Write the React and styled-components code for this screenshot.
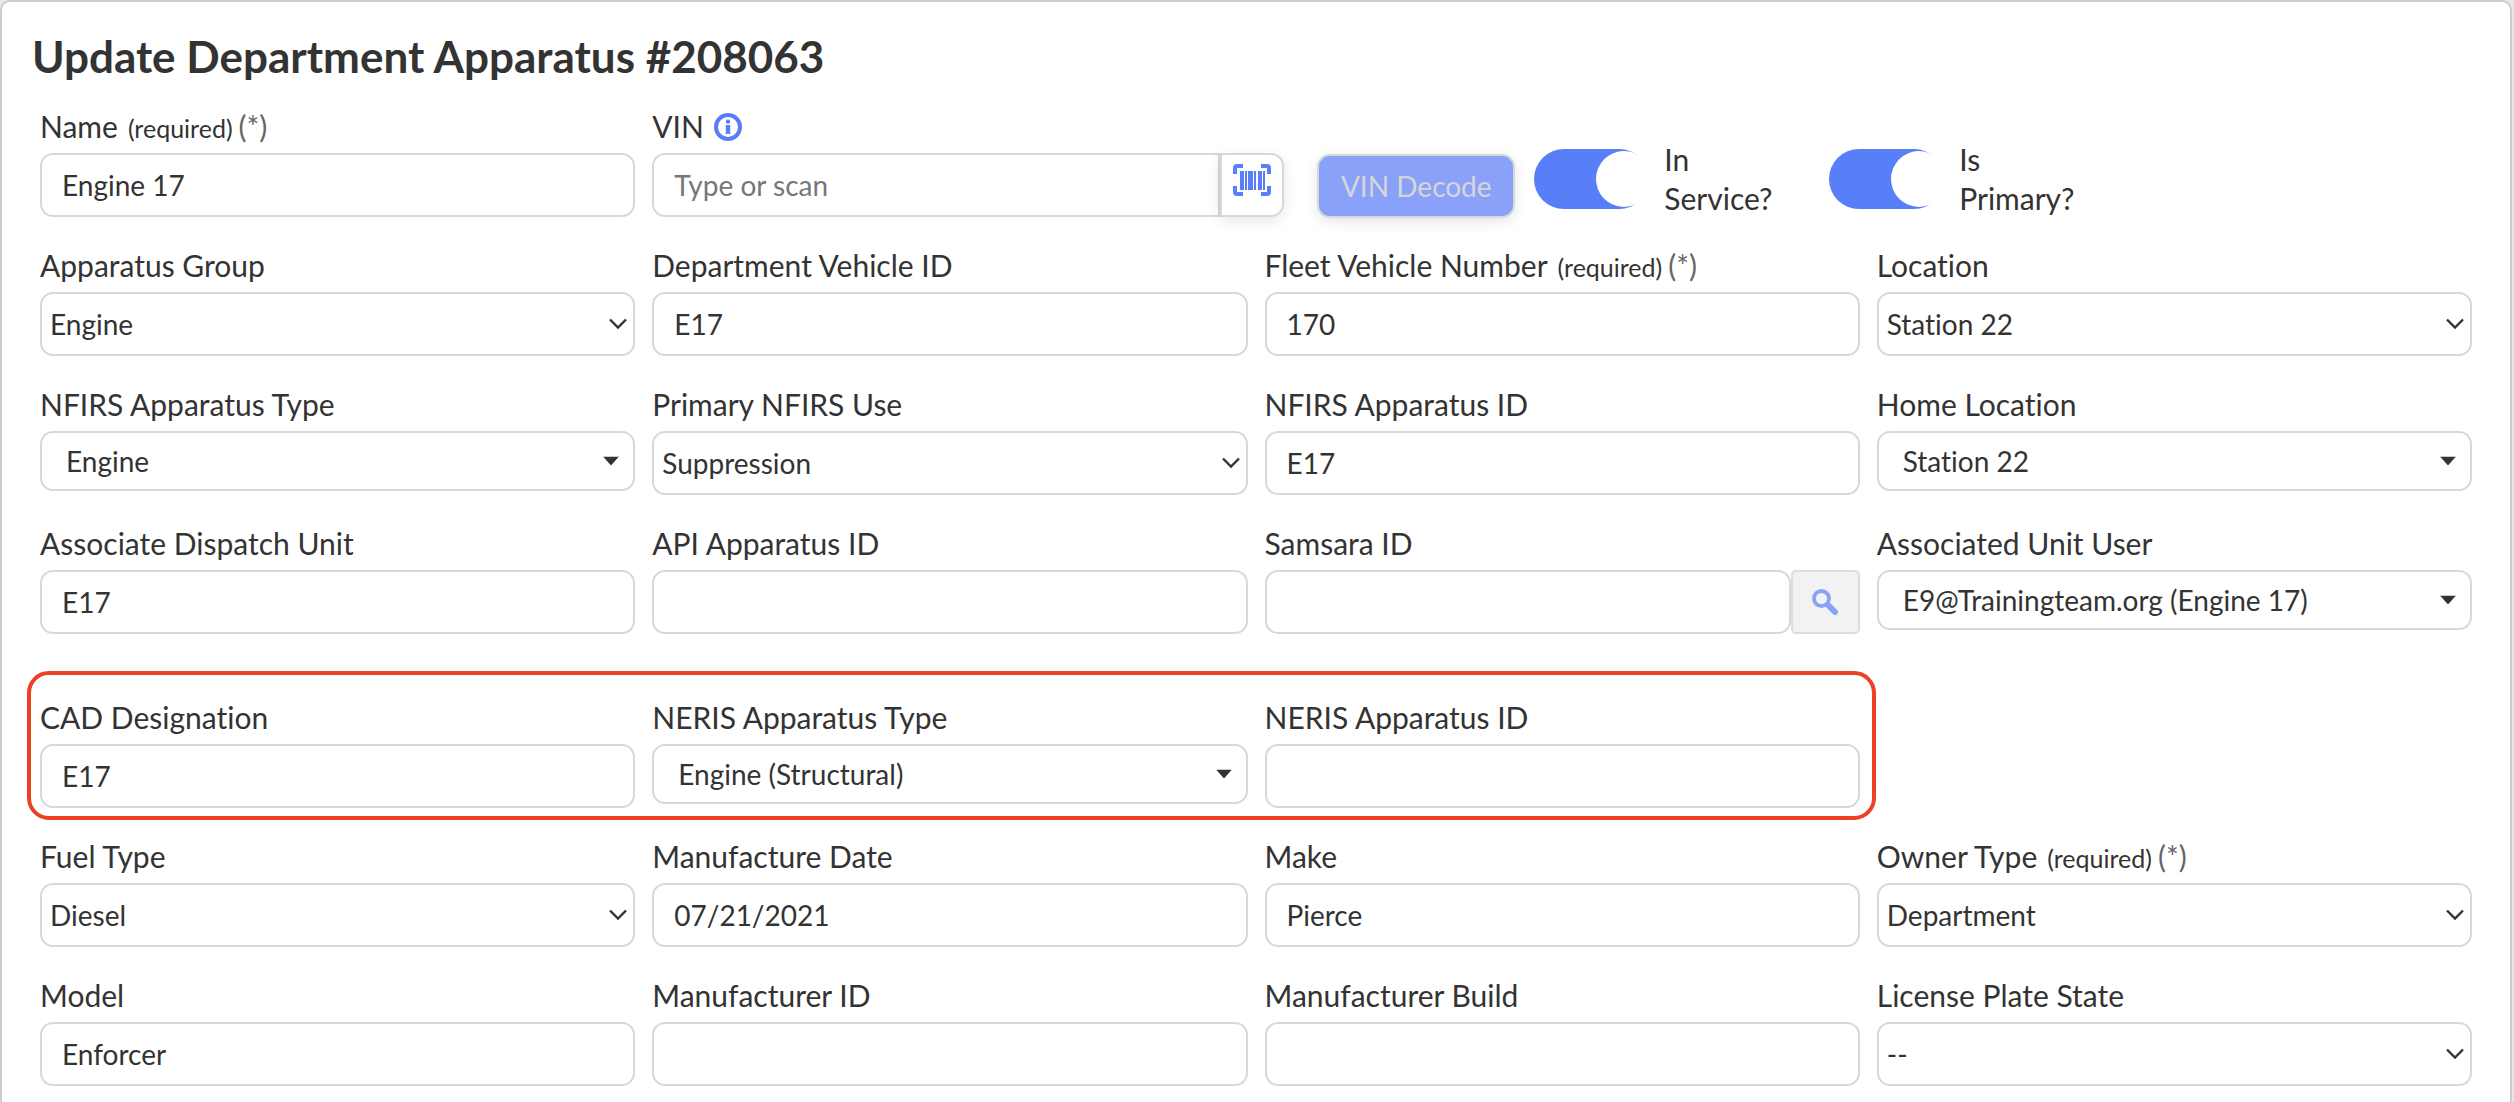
import React from 'react';
import styled, { createGlobalStyle, css } from 'styled-components';

const GlobalStyle = createGlobalStyle`
  * {
    box-sizing: border-box;
  }
  body {
    margin: 0;
    background: #e6e6ec;
    color: #333;
    font-family: Lato, 'Open Sans', sans-serif;
    font-size: 30px;
    font-variant-ligatures: none;
  }
`;

const Card = styled.main`
  min-height: 100vh;
  margin-right: 2px;
  padding: 26px 38px 16px;
  background: #fff;
  border: 2px solid #ccc;
  border-bottom: 0;
  border-radius: 10px 10px 0 0;
`;

const Title = styled.h1`
  margin: 0 0 27px -8px;
  font-size: 44px;
  line-height: 56px;
  font-weight: 700;
`;

const Row = styled.div`
  display: grid;
  grid-template-columns: repeat(4, minmax(0, 1fr));
  column-gap: 17px;
  align-items: start;
  margin-bottom: 33px;
`;

const Highlight = styled(Row)`
  position: relative;
  margin-top: 68px;

  &::after {
    content: '';
    position: absolute;
    top: -31px;
    right: calc(25% - 12px);
    bottom: -12px;
    left: -13px;
    border: 4px solid #ec4127;
    border-radius: 22px;
    pointer-events: none;
  }
`;

const FieldBox = styled.div`
  min-width: 0;
`;

const Label = styled.label`
  display: flex;
  align-items: baseline;
  height: 42px;
  line-height: 30px;
  white-space: nowrap;
`;

const Required = styled.span`
  margin-left: 10px;
  font-size: 25px;
`;

const Star = styled.span`
  margin-left: 6px;
  color: #666;
`;

const control = css`
  display: block;
  width: 100%;
  height: 64px;
  margin: 0;
  background: #fff;
  border: 2px solid #d8d8d8;
  border-radius: 13px;
  color: #333;
  font-family: inherit;
  font-size: 28px;
  font-variant-ligatures: none;
`;

const Input = styled.input`
  ${control}
  padding: 0 20px;

  &::placeholder {
    color: #777;
    opacity: 1;
  }
`;

const SelectWrap = styled.div`
  position: relative;

  svg {
    position: absolute;
    top: 50%;
    right: ${(p) => (p.$caret ? '16px' : '8px')};
    transform: translateY(-50%);
    pointer-events: none;
  }
`;

const Select = styled.select`
  ${control}
  height: ${(p) => (p.$caret ? '60px' : '64px')};
  padding: 0 40px 0 ${(p) => (p.$caret ? '24px' : '8px')};
  appearance: none;
`;

const Group = styled.div`
  display: flex;
`;

const SearchButton = styled.button`
  flex: none;
  display: grid;
  place-items: center;
  width: 69px;
  height: 64px;
  padding: 0;
  background: #f2f2f2;
  border: 2px solid #ddd;
  border-radius: 5px;
`;

const VinArea = styled.div`
  grid-column: 2 / 5;
  display: flex;
  align-items: flex-start;
  height: 106px;
`;

const VinField = styled.div`
  flex: none;
  width: 632px;
`;

const InfoIcon = styled.svg`
  align-self: center;
  margin: 0 0 10px 10px;
`;

const VinInput = styled(Input)`
  border-radius: 13px 0 0 13px;
`;

const ScanButton = styled.button`
  flex: none;
  width: 64px;
  height: 64px;
  padding: 0 0 8px;
  background: #fff;
  border: 2px solid #d8d8d8;
  border-radius: 0 13px 13px 0;
  box-shadow: 0 4px 14px rgba(0, 0, 0, 0.1);
`;

const DecodeButton = styled.button`
  flex: none;
  width: 198px;
  height: 64px;
  margin: 43px 19px 0 33px;
  padding: 0;
  background: #8aa1f9;
  border: 2px solid #d8d8d8;
  border-radius: 13px;
  box-shadow: 0 4px 14px rgba(0, 0, 0, 0.1);
  color: #d6d6d6;
  font-family: inherit;
  font-size: 28px;
`;

const ToggleLabel = styled.label`
  flex: none;
  display: flex;
  width: 295px;
  margin-top: 29px;
  line-height: 39px;
`;

const Toggle = styled.input`
  appearance: none;
  flex: none;
  position: relative;
  width: 115px;
  height: 60px;
  margin: 9px 15px 0 0;
  background: #587ef8;
  border-radius: 30px;

  &::after {
    content: '';
    position: absolute;
    top: 2px;
    left: 62px;
    width: 56px;
    height: 56px;
    border-radius: 50%;
    background: #fff;
  }
`;

const ToggleText = styled.span`
  width: 120px;
`;

const Chevron = () => (
  <svg width="18" height="12" viewBox="0 0 18 12" fill="none" stroke="#333" strokeWidth="2.4">
    <path d="M1 1.5l8 8 8-8" />
  </svg>
);

const Caret = () => (
  <svg width="16" height="9" viewBox="0 0 16 9" fill="#333">
    <path d="M0 0h16L8 9z" />
  </svg>
);

const SearchIcon = () => (
  <svg width="26" height="26" viewBox="0 0 26 26" fill="none" stroke="#8aa1f9">
    <circle cx="9.5" cy="9.5" r="7.5" strokeWidth="3.8" />
    <path d="M17 17l6 6" strokeWidth="6" strokeLinecap="round" />
    <path d="M14.5 14.5l3 3" strokeWidth="4" />
  </svg>
);

const BarcodeIcon = () => (
  <svg width="38" height="32" viewBox="0 0 38 32" fill="none" stroke="#587ef8">
    <path d="M10 2H4a2 2 0 0 0-2 2v6M28 2h6a2 2 0 0 1 2 2v6M10 30H4a2 2 0 0 1-2-2v-6M28 30h6a2 2 0 0 0 2-2v-6" strokeWidth="4" />
    <path fill="#587ef8" stroke="none" d="M7 7h4v19H7zM12 7h2v19h-2zM15 7h5v19h-5zM21 7h2v19h-2zM25 7h4v19h-4zM30 7h2v19h-2z" />
  </svg>
);

const toId = (label) => label.toLowerCase().replace(/[^a-z]+/g, '-');

const FieldLabel = ({ label, required }) => (
  <Label htmlFor={toId(label)}>
    {label}
    {required && <Required>(required)</Required>}
    {required && <Star>(*)</Star>}
  </Label>
);

const Field = ({ label, value = '', type = 'text', required }) => {
  const id = toId(label);
  const caret = type === 'caret';
  return (
    <FieldBox>
      <FieldLabel label={label} required={required} />
      {type === 'text' && <Input id={id} defaultValue={value} />}
      {(type === 'select' || caret) && (
        <SelectWrap $caret={caret}>
          <Select id={id} $caret={caret}>
            <option>{value}</option>
          </Select>
          {caret ? <Caret /> : <Chevron />}
        </SelectWrap>
      )}
      {type === 'search' && (
        <Group>
          <Input id={id} defaultValue={value} />
          <SearchButton type="button" aria-label="Search">
            <SearchIcon />
          </SearchButton>
        </Group>
      )}
    </FieldBox>
  );
};

const topRows = [
  [
    { label: 'Apparatus Group', value: 'Engine', type: 'select' },
    { label: 'Department Vehicle ID', value: 'E17' },
    { label: 'Fleet Vehicle Number', value: '170', required: true },
    { label: 'Location', value: 'Station 22', type: 'select' },
  ],
  [
    { label: 'NFIRS Apparatus Type', value: 'Engine', type: 'caret' },
    { label: 'Primary NFIRS Use', value: 'Suppression', type: 'select' },
    { label: 'NFIRS Apparatus ID', value: 'E17' },
    { label: 'Home Location', value: 'Station 22', type: 'caret' },
  ],
  [
    { label: 'Associate Dispatch Unit', value: 'E17' },
    { label: 'API Apparatus ID' },
    { label: 'Samsara ID', type: 'search' },
    { label: 'Associated Unit User', value: 'E9@Trainingteam.org (Engine 17)', type: 'caret' },
  ],
];

const nerisRow = [
  { label: 'CAD Designation', value: 'E17' },
  { label: 'NERIS Apparatus Type', value: 'Engine (Structural)', type: 'caret' },
  { label: 'NERIS Apparatus ID' },
];

const bottomRows = [
  [
    { label: 'Fuel Type', value: 'Diesel', type: 'select' },
    { label: 'Manufacture Date', value: '07/21/2021' },
    { label: 'Make', value: 'Pierce' },
    { label: 'Owner Type', value: 'Department', type: 'select', required: true },
  ],
  [
    { label: 'Model', value: 'Enforcer' },
    { label: 'Manufacturer ID' },
    { label: 'Manufacturer Build' },
    { label: 'License Plate State', value: '--', type: 'select' },
  ],
];

const renderFields = (fields) => fields.map((f) => <Field key={f.label} {...f} />);

const App = () => {
  return (
    <>
      <GlobalStyle />
      <Card>
        <Title>Update Department Apparatus #208063</Title>
        <form>
          <Row>
            <Field label="Name" value="Engine 17" required />
            <VinArea>
              <VinField>
                <Label htmlFor="vin">
                  VIN
                  <InfoIcon width="28" height="28" viewBox="0 0 28 28" fill="none" stroke="#587ef8">
                    <circle cx="14" cy="14" r="12" strokeWidth="4" />
                    <path d="M14 12v9" strokeWidth="4.4" />
                    <circle cx="14" cy="8.6" r="2.2" fill="#587ef8" stroke="none" />
                  </InfoIcon>
                </Label>
                <Group>
                  <VinInput id="vin" placeholder="Type or scan" />
                  <ScanButton type="button" aria-label="Scan barcode">
                    <BarcodeIcon />
                  </ScanButton>
                </Group>
              </VinField>
              <DecodeButton type="button">VIN Decode</DecodeButton>
              <ToggleLabel>
                <Toggle type="checkbox" defaultChecked />
                <ToggleText>In Service?</ToggleText>
              </ToggleLabel>
              <ToggleLabel>
                <Toggle type="checkbox" defaultChecked />
                <ToggleText>Is Primary?</ToggleText>
              </ToggleLabel>
            </VinArea>
          </Row>
          {topRows.map((fields) => (
            <Row key={fields[0].label}>{renderFields(fields)}</Row>
          ))}
          <Highlight>{renderFields(nerisRow)}</Highlight>
          {bottomRows.map((fields) => (
            <Row key={fields[0].label}>{renderFields(fields)}</Row>
          ))}
        </form>
      </Card>
    </>
  );
};

export default App;
